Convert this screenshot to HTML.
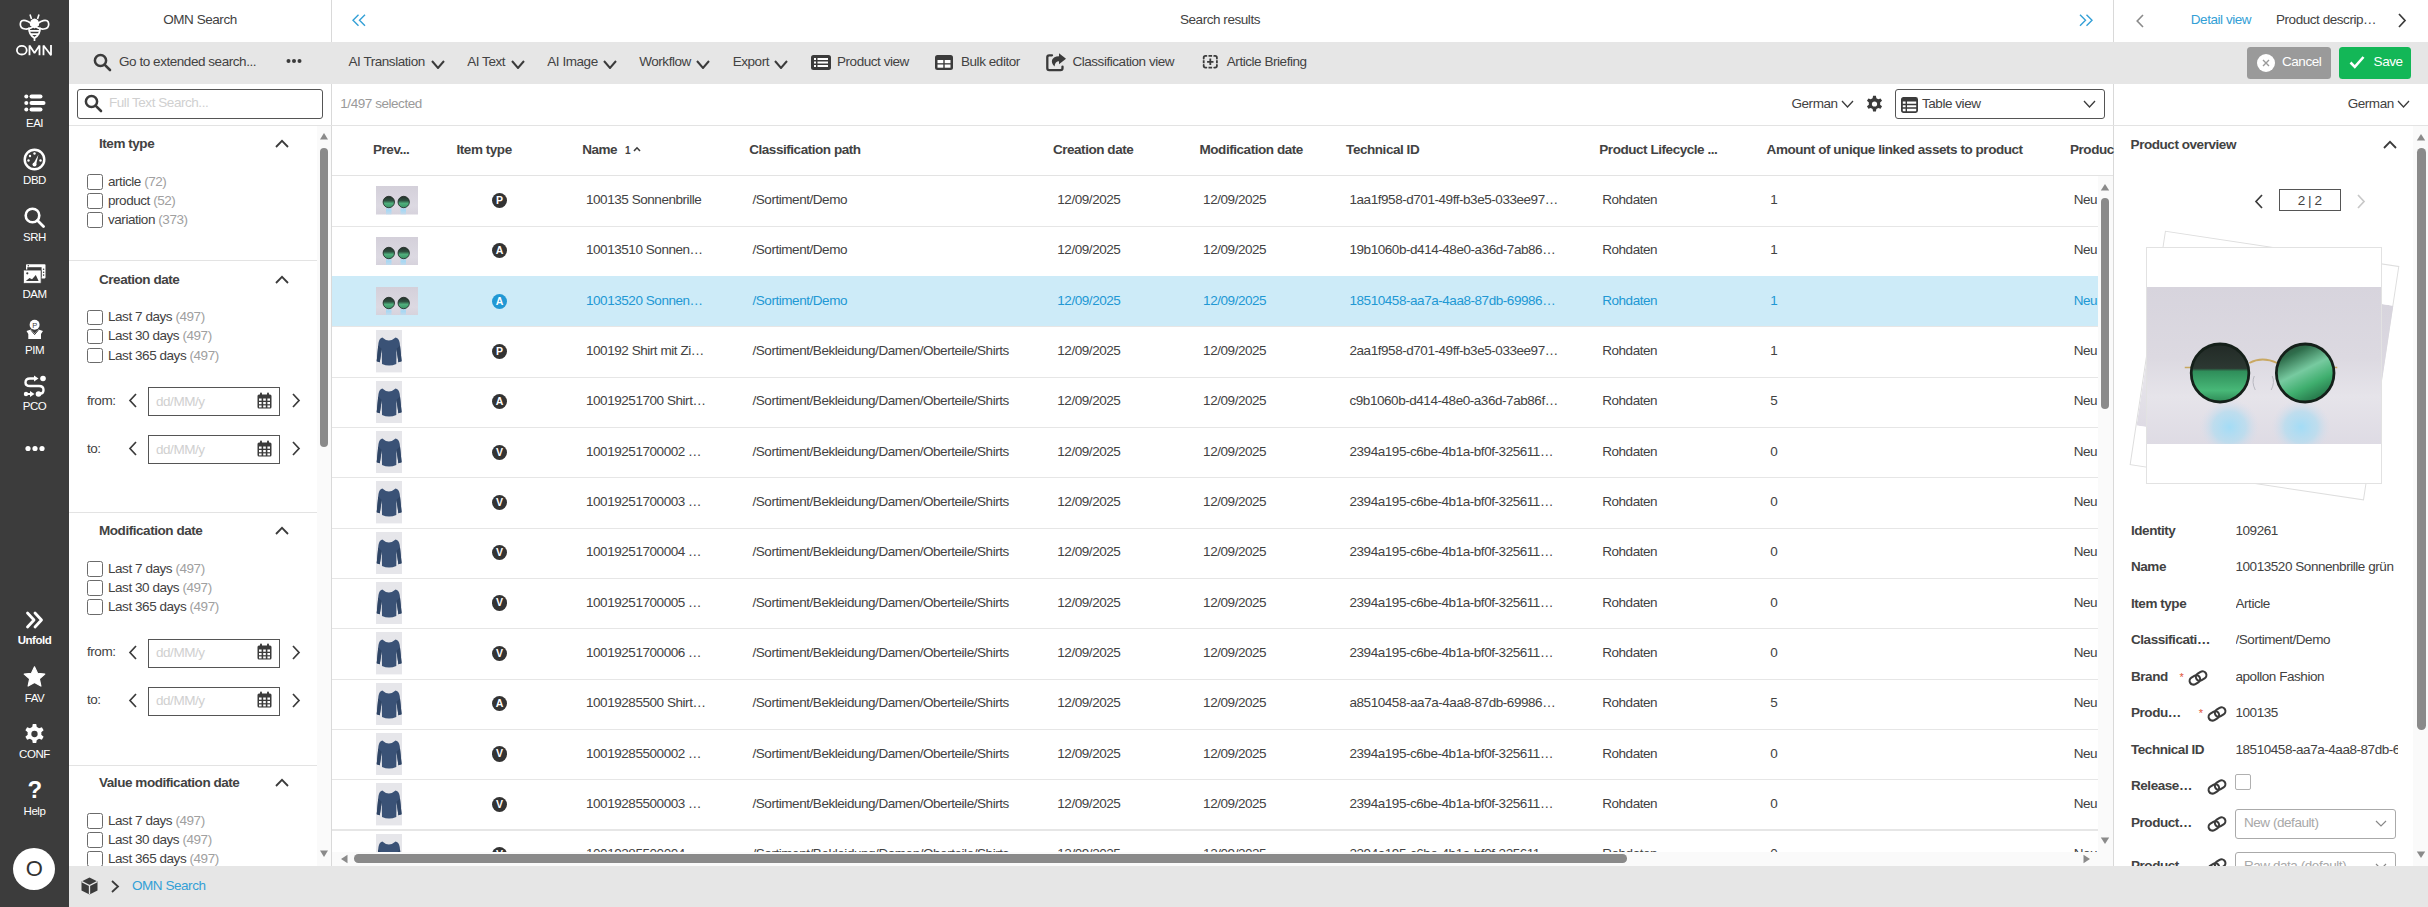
<!DOCTYPE html><html><head><meta charset="utf-8"><style>
*{box-sizing:border-box;margin:0;padding:0}
html,body{width:2428px;height:907px;overflow:hidden;background:#fff;font-family:"Liberation Sans",sans-serif;color:#424242;font-size:13.5px;letter-spacing:-0.45px}
.ab{position:absolute}
.t{position:absolute;white-space:nowrap;line-height:14px}
.b{font-weight:bold}
.side{position:absolute;left:0;top:0;width:69px;height:907px;background:#3c3c3c}
.slab{position:absolute;left:0;width:69px;text-align:center;color:#fff;font-size:11.5px;line-height:12px}
.gray{background:#e6e6e6}
.hl{position:absolute;height:1px;background:#e3e3e3}
.vl{position:absolute;width:1px;background:#d9d9d9}
.cb{position:absolute;width:16px;height:15.5px;border:1.3px solid #6b6b6b;border-radius:2.5px;background:#fff}
.cnt{color:#a0a0a0}
</style></head><body>

<div class="side">
<svg class="ab" style="left:0;top:0" width="69" height="60" viewBox="0 0 69 60">
<g fill="none" stroke="#fff" stroke-width="1.7">
<path d="M33.5 26.5 C30 20.5 20.5 17.5 20.3 24 C20.2 30.5 29 30 33.5 26.5 Z"/>
<path d="M35.5 26.5 C39 20.5 48.5 17.5 48.7 24 C48.8 30.5 40 30 35.5 26.5 Z"/>
<path d="M29 27.5 Q28.5 34.5 34.5 38 Q40.5 34.5 40 27.5"/>
<path d="M29.3 30.8 H39.7 M30.3 34.2 H38.7"/>
<path d="M34.5 37.5 V41"/>
</g>
<path d="M30 25.5 Q29.5 19 34.5 18.5 Q39.5 19 39 25.5 L34.5 28.5 Z" fill="#fff"/>
<path d="M31.5 19 L30 14.5 M37.5 19 L39 14.5" stroke="#fff" stroke-width="1.6"/>
<g fill="none" stroke="#fff" stroke-width="1.8" stroke-linejoin="bevel">
<ellipse cx="21.8" cy="50.2" rx="4.9" ry="4.3"/>
<path d="M29.5 55.3 V45.5 L34.5 53 L39.5 45.5 V55.3"/>
<path d="M43.5 55.3 V45.5 L51 55.3 V45"/>
</g></svg>
<svg class="ab" style="left:24px;top:94px" width="22" height="18" viewBox="0 0 22 18">
<g fill="#fff"><circle cx="2.3" cy="2.5" r="2"/><circle cx="2.3" cy="9" r="2"/><circle cx="2.3" cy="15.5" r="2"/>
<rect x="5.5" y="0.5" width="13" height="4" rx="2"/><rect x="5.5" y="7" width="16" height="4" rx="2"/><rect x="5.5" y="13.5" width="13" height="4" rx="2"/></g></svg>
<div class="slab" style="top:117px">EAI</div>
<svg class="ab" style="left:23px;top:148px" width="23" height="23" viewBox="0 0 23 23">
<circle cx="11.5" cy="11.5" r="9.8" fill="none" stroke="#fff" stroke-width="2.4"/>
<g fill="#fff"><circle cx="7" cy="8" r="1.2"/><circle cx="11.5" cy="5.5" r="1.2"/><circle cx="5.5" cy="12.5" r="1.2"/><circle cx="17.5" cy="12.5" r="1.2"/>
<path d="M10 16.5 L15.5 6.5 L13 17 Z"/><circle cx="11.5" cy="16.5" r="2"/></g></svg>
<div class="slab" style="top:174px">DBD</div>
<svg class="ab" style="left:24px;top:207px" width="21" height="21" viewBox="0 0 21 21">
<circle cx="8.5" cy="8.5" r="6.8" fill="none" stroke="#fff" stroke-width="2.6"/><path d="M13.5 13.5 L19.5 19.5" stroke="#fff" stroke-width="2.8" stroke-linecap="round"/></svg>
<div class="slab" style="top:231px">SRH</div>
<svg class="ab" style="left:23px;top:263px" width="24" height="21" viewBox="0 0 24 21">
<rect x="3" y="1.2" width="19.5" height="14.2" rx="0.8" fill="#fff"/><rect x="4.3" y="4.2" width="14.3" height="9.8" fill="#3c3c3c"/>
<g fill="#3c3c3c"><circle cx="20.6" cy="6.3" r="0.8"/><circle cx="20.6" cy="9.2" r="0.8"/><circle cx="20.6" cy="12.1" r="0.8"/><circle cx="5.3" cy="2.7" r="0.7"/></g>
<rect x="0.4" y="7" width="17.8" height="13.4" rx="0.8" fill="#fff" stroke="#3c3c3c" stroke-width="0.9"/>
<path d="M2.8 18 L6.5 15 L9 16.3 L12.8 12 L15.6 18 Z" fill="#3c3c3c"/><circle cx="4.3" cy="10.3" r="1.1" fill="#3c3c3c"/></svg>
<div class="slab" style="top:288px">DAM</div>
<svg class="ab" style="left:24px;top:319px" width="21" height="21" viewBox="0 0 21 21">
<circle cx="10.6" cy="5.8" r="5" fill="#fff"/><text x="10.6" y="8.7" font-size="7.5" text-anchor="middle" font-family="Liberation Sans" fill="#3c3c3c">P</text>
<path d="M2.5 12 L7 10.5 L10.6 14.5 L14.5 10.5 L19 12 L17 15 L17 20 L4.3 20 L4.3 15 Z" fill="#fff"/>
<path d="M7 11.2 L10.6 15.6 L14.3 11.2" fill="none" stroke="#3c3c3c" stroke-width="1"/></svg>
<div class="slab" style="top:344px">PIM</div>
<svg class="ab" style="left:23px;top:375px" width="24" height="23" viewBox="0 0 24 23">
<g fill="none" stroke="#fff" stroke-width="2.4" stroke-linecap="round">
<path d="M12 3.5 H7 Q2.5 3.5 2.5 7.5 Q2.5 11 7 11 H16 Q20.5 11 20.5 15 Q20.5 19 16 19"/></g>
<g fill="#fff"><circle cx="20" cy="3.5" r="2.8"/><circle cx="3" cy="19" r="2.2"/><circle cx="15.5" cy="19" r="2.8"/>
<path d="M11 0.5 L15.5 3.5 L11 6.5 Z"/><path d="M7 16 L11.5 19 L7 22 Z"/><rect x="4" y="18" width="5" height="2"/></g></svg>
<div class="slab" style="top:400px">PCO</div>
<svg class="ab" style="left:25px;top:445px" width="20" height="7" viewBox="0 0 20 7"><g fill="#fff"><circle cx="3" cy="3.5" r="2.6"/><circle cx="10" cy="3.5" r="2.6"/><circle cx="17" cy="3.5" r="2.6"/></g></svg>
<svg class="ab" style="left:25px;top:611px" width="20" height="18" viewBox="0 0 20 18">
<g fill="none" stroke="#fff" stroke-width="2.8" stroke-linejoin="round" stroke-linecap="round"><path d="M2.5 2 L9 9 L2.5 16"/><path d="M10 2 L16.5 9 L10 16"/></g></svg>
<div class="slab b" style="top:634px;font-size:11.5px">Unfold</div>
<svg class="ab" style="left:23px;top:666px" width="23" height="22" viewBox="0 0 24 23">
<path d="M12 0.8 L15.2 7.6 L22.8 8.4 L17.1 13.5 L18.7 21 L12 17.2 L5.3 21 L6.9 13.5 L1.2 8.4 L8.8 7.6 Z" fill="#fff" stroke="#fff" stroke-width="1.2" stroke-linejoin="round"/></svg>
<div class="slab" style="top:692px">FAV</div>
<svg class="ab" style="left:23px;top:723px" width="23" height="22" viewBox="0 0 24 22">
<path d="M10.2 0.5 h3.6 l0.6 3.1 a8.6 8.6 0 0 1 2.3 1.3 l3-1 1.8 3.1 -2.4 2.1 a8.6 8.6 0 0 1 0 2.7 l2.4 2.1 -1.8 3.1 -3 -1 a8.6 8.6 0 0 1 -2.3 1.3 l-0.6 3.1 h-3.6 l-0.6 -3.1 a8.6 8.6 0 0 1 -2.3 -1.3 l-3 1 -1.8 -3.1 2.4 -2.1 a8.6 8.6 0 0 1 0 -2.7 l-2.4 -2.1 1.8 -3.1 3 1 a8.6 8.6 0 0 1 2.3 -1.3 z" fill="#fff"/><circle cx="12" cy="11" r="3.3" fill="#3c3c3c"/></svg>
<div class="slab" style="top:748px">CONF</div>
<div class="slab b" style="top:777px;font-size:24px;line-height:26px">?</div>
<div class="slab" style="top:805px">Help</div>
<div class="ab" style="left:13px;top:848px;width:42px;height:42px;border-radius:50%;background:#fff;color:#333;font-size:22px;line-height:42px;text-align:center">O</div>
</div>
<div class="ab gray" style="left:69px;top:42px;width:2359px;height:42px"></div>
<div class="vl" style="left:331px;top:0;height:42px"></div>
<div class="vl" style="left:331px;top:84px;height:782px"></div>
<div class="vl" style="left:2113px;top:0;height:42px"></div>
<div class="vl" style="left:2113px;top:84px;height:782px"></div>
<div class="hl" style="left:69px;top:125px;width:2359px"></div>
<div class="t" style="left:69px;width:262px;top:13px;text-align:center">OMN Search</div>
<svg class="ab" style="left:93px;top:53px" width="19" height="19" viewBox="0 0 19 19"><circle cx="7.5" cy="7.5" r="5.6" fill="none" stroke="#3b3b3b" stroke-width="2.5"/><path d="M11.8 11.8 L17 17" stroke="#3b3b3b" stroke-width="2.6" stroke-linecap="round"/></svg>
<div class="t" style="left:119px;top:55px">Go to extended search...</div>
<svg class="ab" style="left:286px;top:58px" width="16" height="6" viewBox="0 0 16 6"><g fill="#3b3b3b"><circle cx="2.5" cy="3" r="2"/><circle cx="8" cy="3" r="2"/><circle cx="13.5" cy="3" r="2"/></g></svg>
<div class="ab" style="left:77px;top:89px;width:246px;height:30px;border:1.3px solid #555;border-radius:3px;background:#fff"></div>
<svg class="ab" style="left:84px;top:94px" width="19" height="19" viewBox="0 0 19 19"><circle cx="7.5" cy="7.5" r="5.6" fill="none" stroke="#3b3b3b" stroke-width="2.5"/><path d="M11.8 11.8 L17 17" stroke="#3b3b3b" stroke-width="2.6" stroke-linecap="round"/></svg>
<div class="t" style="left:109px;top:96px;color:#d0d0d0">Full Text Search...</div>
<div class="ab" style="left:317px;top:126px;width:14px;height:740px;background:#fafafa"></div>
<svg class="ab" style="left:319px;top:132px" width="10" height="8" viewBox="0 0 10 8"><path d="M1 7.5 L5 1 L9 7.5 Z" fill="#8a8a8a"/></svg>
<div class="ab" style="left:320px;top:148px;width:8px;height:299px;border-radius:4px;background:#8a8a8a"></div>
<svg class="ab" style="left:319px;top:850px" width="10" height="8" viewBox="0 0 10 8"><path d="M1 0.5 L5 7 L9 0.5 Z" fill="#8a8a8a"/></svg>
<div class="t b" style="left:99px;top:137px">Item type</div>
<svg class="ab" style="left:275px;top:139px" width="14" height="9" viewBox="0 0 14 9"><path d="M1 8 L7 1.8 L13 8" fill="none" stroke="#3b3b3b" stroke-width="1.8"/></svg>
<div class="cb" style="left:87px;top:174.0px"></div>
<div class="t" style="left:108px;top:174.8px">article <span class="cnt">(72)</span></div>
<div class="cb" style="left:87px;top:193.1px"></div>
<div class="t" style="left:108px;top:193.9px">product <span class="cnt">(52)</span></div>
<div class="cb" style="left:87px;top:212.2px"></div>
<div class="t" style="left:108px;top:213.0px">variation <span class="cnt">(373)</span></div>
<div class="hl" style="left:69px;top:260px;width:248px"></div>
<div class="t b" style="left:99px;top:272.5px">Creation date</div>
<svg class="ab" style="left:275px;top:274.5px" width="14" height="9" viewBox="0 0 14 9"><path d="M1 8 L7 1.8 L13 8" fill="none" stroke="#3b3b3b" stroke-width="1.8"/></svg>
<div class="cb" style="left:87px;top:309.5px"></div>
<div class="t" style="left:108px;top:310.3px">Last 7 days <span class="cnt">(497)</span></div>
<div class="cb" style="left:87px;top:328.6px"></div>
<div class="t" style="left:108px;top:329.4px">Last 30 days <span class="cnt">(497)</span></div>
<div class="cb" style="left:87px;top:347.7px"></div>
<div class="t" style="left:108px;top:348.5px">Last 365 days <span class="cnt">(497)</span></div>
<div class="t" style="left:87px;top:393.5px">from:</div>
<svg class="ab" style="left:128px;top:393.0px" width="10" height="15" viewBox="0 0 10 15"><path d="M8 1 L2 7.5 L8 14" fill="none" stroke="#3b3b3b" stroke-width="1.7"/></svg>
<div class="ab" style="left:148px;top:387.0px;width:132px;height:29px;border:1.3px solid #555;background:#fff"></div>
<div class="t" style="left:156px;top:394.5px;color:#d0d0d0">dd/MM/y</div>
<svg class="ab" style="left:257px;top:391.5px" width="15" height="17" viewBox="0 0 15 17"><rect x="0.5" y="2.5" width="14" height="14" rx="1.5" fill="#3b3b3b"/><rect x="3" y="0.5" width="2" height="4" rx="1" fill="#3b3b3b"/><rect x="10" y="0.5" width="2" height="4" rx="1" fill="#3b3b3b"/>
<g fill="#fff"><rect x="2" y="6.5" width="2.6" height="2.2"/><rect x="6.2" y="6.5" width="2.6" height="2.2"/><rect x="10.4" y="6.5" width="2.6" height="2.2"/><rect x="2" y="10" width="2.6" height="2.2"/><rect x="6.2" y="10" width="2.6" height="2.2"/><rect x="10.4" y="10" width="2.6" height="2.2"/><rect x="2" y="13.4" width="2.6" height="2"/><rect x="6.2" y="13.4" width="2.6" height="2"/><rect x="10.4" y="13.4" width="2.6" height="2"/></g></svg>
<svg class="ab" style="left:291px;top:393.0px" width="10" height="15" viewBox="0 0 10 15"><path d="M2 1 L8 7.5 L2 14" fill="none" stroke="#3b3b3b" stroke-width="1.7"/></svg>
<div class="t" style="left:87px;top:441.5px">to:</div>
<svg class="ab" style="left:128px;top:441.0px" width="10" height="15" viewBox="0 0 10 15"><path d="M8 1 L2 7.5 L8 14" fill="none" stroke="#3b3b3b" stroke-width="1.7"/></svg>
<div class="ab" style="left:148px;top:435.0px;width:132px;height:29px;border:1.3px solid #555;background:#fff"></div>
<div class="t" style="left:156px;top:442.5px;color:#d0d0d0">dd/MM/y</div>
<svg class="ab" style="left:257px;top:439.5px" width="15" height="17" viewBox="0 0 15 17"><rect x="0.5" y="2.5" width="14" height="14" rx="1.5" fill="#3b3b3b"/><rect x="3" y="0.5" width="2" height="4" rx="1" fill="#3b3b3b"/><rect x="10" y="0.5" width="2" height="4" rx="1" fill="#3b3b3b"/>
<g fill="#fff"><rect x="2" y="6.5" width="2.6" height="2.2"/><rect x="6.2" y="6.5" width="2.6" height="2.2"/><rect x="10.4" y="6.5" width="2.6" height="2.2"/><rect x="2" y="10" width="2.6" height="2.2"/><rect x="6.2" y="10" width="2.6" height="2.2"/><rect x="10.4" y="10" width="2.6" height="2.2"/><rect x="2" y="13.4" width="2.6" height="2"/><rect x="6.2" y="13.4" width="2.6" height="2"/><rect x="10.4" y="13.4" width="2.6" height="2"/></g></svg>
<svg class="ab" style="left:291px;top:441.0px" width="10" height="15" viewBox="0 0 10 15"><path d="M2 1 L8 7.5 L2 14" fill="none" stroke="#3b3b3b" stroke-width="1.7"/></svg>
<div class="hl" style="left:69px;top:512px;width:248px"></div>
<div class="t b" style="left:99px;top:524px">Modification date</div>
<svg class="ab" style="left:275px;top:526px" width="14" height="9" viewBox="0 0 14 9"><path d="M1 8 L7 1.8 L13 8" fill="none" stroke="#3b3b3b" stroke-width="1.8"/></svg>
<div class="cb" style="left:87px;top:561.0px"></div>
<div class="t" style="left:108px;top:561.8px">Last 7 days <span class="cnt">(497)</span></div>
<div class="cb" style="left:87px;top:580.1px"></div>
<div class="t" style="left:108px;top:580.9px">Last 30 days <span class="cnt">(497)</span></div>
<div class="cb" style="left:87px;top:599.2px"></div>
<div class="t" style="left:108px;top:600.0px">Last 365 days <span class="cnt">(497)</span></div>
<div class="t" style="left:87px;top:645px">from:</div>
<svg class="ab" style="left:128px;top:644.5px" width="10" height="15" viewBox="0 0 10 15"><path d="M8 1 L2 7.5 L8 14" fill="none" stroke="#3b3b3b" stroke-width="1.7"/></svg>
<div class="ab" style="left:148px;top:638.5px;width:132px;height:29px;border:1.3px solid #555;background:#fff"></div>
<div class="t" style="left:156px;top:646px;color:#d0d0d0">dd/MM/y</div>
<svg class="ab" style="left:257px;top:643px" width="15" height="17" viewBox="0 0 15 17"><rect x="0.5" y="2.5" width="14" height="14" rx="1.5" fill="#3b3b3b"/><rect x="3" y="0.5" width="2" height="4" rx="1" fill="#3b3b3b"/><rect x="10" y="0.5" width="2" height="4" rx="1" fill="#3b3b3b"/>
<g fill="#fff"><rect x="2" y="6.5" width="2.6" height="2.2"/><rect x="6.2" y="6.5" width="2.6" height="2.2"/><rect x="10.4" y="6.5" width="2.6" height="2.2"/><rect x="2" y="10" width="2.6" height="2.2"/><rect x="6.2" y="10" width="2.6" height="2.2"/><rect x="10.4" y="10" width="2.6" height="2.2"/><rect x="2" y="13.4" width="2.6" height="2"/><rect x="6.2" y="13.4" width="2.6" height="2"/><rect x="10.4" y="13.4" width="2.6" height="2"/></g></svg>
<svg class="ab" style="left:291px;top:644.5px" width="10" height="15" viewBox="0 0 10 15"><path d="M2 1 L8 7.5 L2 14" fill="none" stroke="#3b3b3b" stroke-width="1.7"/></svg>
<div class="t" style="left:87px;top:693px">to:</div>
<svg class="ab" style="left:128px;top:692.5px" width="10" height="15" viewBox="0 0 10 15"><path d="M8 1 L2 7.5 L8 14" fill="none" stroke="#3b3b3b" stroke-width="1.7"/></svg>
<div class="ab" style="left:148px;top:686.5px;width:132px;height:29px;border:1.3px solid #555;background:#fff"></div>
<div class="t" style="left:156px;top:694px;color:#d0d0d0">dd/MM/y</div>
<svg class="ab" style="left:257px;top:691px" width="15" height="17" viewBox="0 0 15 17"><rect x="0.5" y="2.5" width="14" height="14" rx="1.5" fill="#3b3b3b"/><rect x="3" y="0.5" width="2" height="4" rx="1" fill="#3b3b3b"/><rect x="10" y="0.5" width="2" height="4" rx="1" fill="#3b3b3b"/>
<g fill="#fff"><rect x="2" y="6.5" width="2.6" height="2.2"/><rect x="6.2" y="6.5" width="2.6" height="2.2"/><rect x="10.4" y="6.5" width="2.6" height="2.2"/><rect x="2" y="10" width="2.6" height="2.2"/><rect x="6.2" y="10" width="2.6" height="2.2"/><rect x="10.4" y="10" width="2.6" height="2.2"/><rect x="2" y="13.4" width="2.6" height="2"/><rect x="6.2" y="13.4" width="2.6" height="2"/><rect x="10.4" y="13.4" width="2.6" height="2"/></g></svg>
<svg class="ab" style="left:291px;top:692.5px" width="10" height="15" viewBox="0 0 10 15"><path d="M2 1 L8 7.5 L2 14" fill="none" stroke="#3b3b3b" stroke-width="1.7"/></svg>
<div class="hl" style="left:69px;top:765px;width:248px"></div>
<div class="t b" style="left:99px;top:776.2px">Value modification date</div>
<svg class="ab" style="left:275px;top:778.2px" width="14" height="9" viewBox="0 0 14 9"><path d="M1 8 L7 1.8 L13 8" fill="none" stroke="#3b3b3b" stroke-width="1.8"/></svg>
<div class="cb" style="left:87px;top:813.2px"></div>
<div class="t" style="left:108px;top:814.0px">Last 7 days <span class="cnt">(497)</span></div>
<div class="cb" style="left:87px;top:832.3px"></div>
<div class="t" style="left:108px;top:833.1px">Last 30 days <span class="cnt">(497)</span></div>
<div class="cb" style="left:87px;top:851.4px"></div>
<div class="t" style="left:108px;top:852.2px">Last 365 days <span class="cnt">(497)</span></div>
<svg class="ab" style="left:352px;top:14px" width="14" height="13" viewBox="0 0 14 13"><path d="M6.5 0.8 L1 6.3 L6.5 11.8 M13 0.8 L7.5 6.3 L13 11.8" fill="none" stroke="#33a0d6" stroke-width="1.4"/></svg>
<div class="t" style="left:1180px;top:13px">Search results</div>
<svg class="ab" style="left:2079px;top:14px" width="14" height="13" viewBox="0 0 14 13"><path d="M1 0.8 L6.5 6.3 L1 11.8 M7.5 0.8 L13 6.3 L7.5 11.8" fill="none" stroke="#33a0d6" stroke-width="1.4"/></svg>
<div class="t" style="left:348.5px;top:55px">AI Translation</div>
<svg class="ab" style="left:430.5px;top:59.5px" width="14" height="9" viewBox="0 0 14 9"><path d="M1 1 L7.0 8 L13 1" fill="none" stroke="#3b3b3b" stroke-width="2"/></svg>
<div class="t" style="left:467.2px;top:55px">AI Text</div>
<svg class="ab" style="left:510.7px;top:59.5px" width="14" height="9" viewBox="0 0 14 9"><path d="M1 1 L7.0 8 L13 1" fill="none" stroke="#3b3b3b" stroke-width="2"/></svg>
<div class="t" style="left:547.3px;top:55px">AI Image</div>
<svg class="ab" style="left:602.5px;top:59.5px" width="14" height="9" viewBox="0 0 14 9"><path d="M1 1 L7.0 8 L13 1" fill="none" stroke="#3b3b3b" stroke-width="2"/></svg>
<div class="t" style="left:639.2px;top:55px">Workflow</div>
<svg class="ab" style="left:696px;top:59.5px" width="14" height="9" viewBox="0 0 14 9"><path d="M1 1 L7.0 8 L13 1" fill="none" stroke="#3b3b3b" stroke-width="2"/></svg>
<div class="t" style="left:732.7px;top:55px">Export</div>
<svg class="ab" style="left:773.9px;top:59.5px" width="14" height="9" viewBox="0 0 14 9"><path d="M1 1 L7.0 8 L13 1" fill="none" stroke="#3b3b3b" stroke-width="2"/></svg>
<svg class="ab" style="left:811px;top:54.5px" width="20" height="15" viewBox="0 0 20 15"><rect x="0" y="0" width="20" height="15" rx="2.5" fill="#3b3b3b"/>
<g fill="#fff"><rect x="3" y="3" width="2" height="2"/><rect x="6.5" y="3" width="10.5" height="2"/><rect x="3" y="6.5" width="2" height="2"/><rect x="6.5" y="6.5" width="10.5" height="2"/><rect x="3" y="10" width="2" height="2"/><rect x="6.5" y="10" width="10.5" height="2"/></g></svg>
<div class="t" style="left:837px;top:55px">Product view</div>
<svg class="ab" style="left:935px;top:54.5px" width="18" height="15" viewBox="0 0 18 15"><rect x="0" y="0" width="18" height="15" rx="2.5" fill="#3b3b3b"/>
<g fill="#fff"><rect x="2.5" y="5" width="5.8" height="3.2"/><rect x="9.7" y="5" width="5.8" height="3.2"/><rect x="2.5" y="9.5" width="5.8" height="3.2"/><rect x="9.7" y="9.5" width="5.8" height="3.2"/></g></svg>
<div class="t" style="left:961px;top:55px">Bulk editor</div>
<svg class="ab" style="left:1046px;top:53px" width="21" height="19" viewBox="0 0 21 19"><path d="M6 2.3 H3.2 Q1.3 2.3 1.3 4.2 V15.3 Q1.3 17.2 3.2 17.2 H14.6 Q16.5 17.2 16.5 15.3 V13.6" fill="none" stroke="#3b3b3b" stroke-width="2.3" stroke-linecap="round"/>
<path d="M8.5 13.4 C3.8 9 5.5 3.6 13 3.3 L13 0.2 L20 5.7 L13 11.2 L13 8.3 C10.4 8.3 9 10 8.5 13.4 Z" fill="#3b3b3b"/></svg>
<div class="t" style="left:1072.4px;top:55px">Classification view</div>
<svg class="ab" style="left:1202px;top:54px" width="17" height="16" viewBox="0 0 17 16"><g fill="none" stroke="#3b3b3b" stroke-width="1.8" stroke-linecap="round">
<path d="M1.7 4.6 V3.7 Q1.7 1.9 3.5 1.9 H4.4 M12.2 1.9 H13.1 Q14.9 1.9 14.9 3.7 V4.6 M1.7 10.9 V11.8 Q1.7 13.6 3.5 13.6 H4.4 M12.2 13.6 H13.1 Q14.9 13.6 14.9 11.8 V10.9"/>
<path d="M6.5 1.9 H10.1 M6.5 13.6 H10.1 M1.7 6.3 V9.2 M14.9 6.3 V9.2" stroke-linecap="butt"/>
<path d="M8.3 4.6 V11 M5.1 7.8 H11.5" stroke-linecap="butt"/></g></svg>
<div class="t" style="left:1226.8px;top:55px">Article Briefing</div>
<div class="t" style="left:340.3px;top:97px;color:#9a9a9a">1/497 selected</div>
<div class="t" style="left:1791.5px;top:97px">German</div>
<svg class="ab" style="left:1841px;top:100px" width="13" height="8" viewBox="0 0 13 8"><path d="M1 1 L6.5 7 L12 1" fill="none" stroke="#3b3b3b" stroke-width="1.3"/></svg>
<svg class="ab" style="left:1865px;top:95px" width="19" height="18" viewBox="0 0 24 22"><path d="M10.2 0.5 h3.6 l0.6 3.1 a8.6 8.6 0 0 1 2.3 1.3 l3-1 1.8 3.1 -2.4 2.1 a8.6 8.6 0 0 1 0 2.7 l2.4 2.1 -1.8 3.1 -3 -1 a8.6 8.6 0 0 1 -2.3 1.3 l-0.6 3.1 h-3.6 l-0.6 -3.1 a8.6 8.6 0 0 1 -2.3 -1.3 l-3 1 -1.8 -3.1 2.4 -2.1 a8.6 8.6 0 0 1 0 -2.7 l-2.4 -2.1 1.8 -3.1 3 1 a8.6 8.6 0 0 1 2.3 -1.3 z" fill="#3b3b3b"/><circle cx="12" cy="11" r="3.3" fill="#fff"/></svg>
<div class="ab" style="left:1895px;top:89px;width:209.5px;height:30px;border:1.3px solid #555;border-radius:3px"></div>
<svg class="ab" style="left:1901px;top:96.5px" width="17" height="16" viewBox="0 0 17 16"><rect x="0.9" y="0.9" width="15.2" height="14.2" rx="1.5" fill="none" stroke="#3b3b3b" stroke-width="1.8"/>
<rect x="1" y="1" width="15" height="3.5" fill="#3b3b3b"/><path d="M5.3 4 V15 M1 7.5 H16 M1 11 H16" stroke="#3b3b3b" stroke-width="1.4"/></svg>
<div class="t" style="left:1922px;top:97px">Table view</div>
<svg class="ab" style="left:2083px;top:100px" width="13" height="8" viewBox="0 0 13 8"><path d="M1 1 L6.5 7 L12 1" fill="none" stroke="#3b3b3b" stroke-width="1.3"/></svg>
<div class="hl" style="left:332px;top:175px;width:1781px"></div>
<div class="t b" style="left:373px;top:143px">Prev...</div>
<div class="t b" style="left:456.5px;top:143px">Item type</div>
<div class="t b" style="left:582.2px;top:143px">Name</div>
<div class="t b" style="left:749.2px;top:143px">Classification path</div>
<div class="t b" style="left:1052.9px;top:143px">Creation date</div>
<div class="t b" style="left:1199.5px;top:143px">Modification date</div>
<div class="t b" style="left:1346.1px;top:143px">Technical ID</div>
<div class="t b" style="left:1599.3px;top:143px">Product Lifecycle ...</div>
<div class="t b" style="left:1766.6px;top:143px">Amount of unique linked assets to product</div>
<div class="t b" style="left:2070px;top:143px">Produc</div>
<div class="t b" style="left:625px;top:144px;font-size:10px">1</div>
<svg class="ab" style="left:633px;top:146px" width="8" height="6" viewBox="0 0 8 6"><path d="M1 5 L4 1.8 L7 5" fill="none" stroke="#3b3b3b" stroke-width="1.6"/></svg>
<div class="ab" style="left:332px;top:176px;width:1766px;height:675.5px;overflow:hidden">
<svg class="ab" style="left:44px;top:10.3px" width="42" height="28.5" viewBox="0 0 42 28.5"><defs><linearGradient id="gb0" x1="0" y1="0" x2="0" y2="1"><stop offset="0" stop-color="#d4d0da"/><stop offset="0.7" stop-color="#dcd9e2"/><stop offset="1" stop-color="#d6d2dc"/></linearGradient>
<linearGradient id="gl0" x1="0" y1="0" x2="0" y2="1"><stop offset="0" stop-color="#25302a"/><stop offset="0.38" stop-color="#2e5040"/><stop offset="0.62" stop-color="#4fae7c"/><stop offset="1" stop-color="#3b9466"/></linearGradient>
<linearGradient id="gr0" x1="0" y1="0" x2="0" y2="1"><stop offset="0" stop-color="#a6d6f2" stop-opacity="0.2"/><stop offset="0.5" stop-color="#a6d8f4"/><stop offset="1" stop-color="#b8dcf2" stop-opacity="0.6"/></linearGradient></defs>
<rect width="42" height="28.5" fill="url(#gb0)"/><rect x="10" y="20" width="5.5" height="8.5" fill="url(#gr0)"/><rect x="24.5" y="20" width="5.5" height="8.5" fill="url(#gr0)"/>
<circle cx="12.8" cy="16" r="5.7" fill="url(#gl0)" stroke="#1b2520" stroke-width="0.8"/><circle cx="27.7" cy="16" r="5.7" fill="url(#gl0)" stroke="#1b2520" stroke-width="0.8"/>
</svg>
<div class="ab" style="left:159.8px;top:16.9px;width:15.2px;height:15.2px;border-radius:50%;background:#333;color:#fff;font-weight:bold;font-size:10.5px;line-height:15.4px;text-align:center">P</div>
<div class="t" style="left:254.0px;top:17.0px;color:#424242">100135 Sonnenbrille</div>
<div class="t" style="left:420.5px;top:17.0px;color:#424242">/Sortiment/Demo</div>
<div class="t" style="left:725.3px;top:17.0px;color:#424242">12/09/2025</div>
<div class="t" style="left:871.1px;top:17.0px;color:#424242">12/09/2025</div>
<div class="t" style="left:1017.5px;top:17.0px;color:#424242">1aa1f958-d701-49ff-b3e5-033ee97…</div>
<div class="t" style="left:1270.2px;top:17.0px;color:#424242">Rohdaten</div>
<div class="t" style="left:1438.3px;top:17.0px;color:#424242">1</div>
<div class="t" style="left:1741.7px;top:17.0px;color:#424242">Neu</div>
<div class="ab" style="left:0;top:49.62px;width:1766px;height:1.2px;background:#e6e6e6"></div>
<svg class="ab" style="left:44px;top:60.6px" width="42" height="28.5" viewBox="0 0 42 28.5"><defs><linearGradient id="gb1" x1="0" y1="0" x2="0" y2="1"><stop offset="0" stop-color="#d4d0da"/><stop offset="0.7" stop-color="#dcd9e2"/><stop offset="1" stop-color="#d6d2dc"/></linearGradient>
<linearGradient id="gl1" x1="0" y1="0" x2="0" y2="1"><stop offset="0" stop-color="#25302a"/><stop offset="0.38" stop-color="#2e5040"/><stop offset="0.62" stop-color="#4fae7c"/><stop offset="1" stop-color="#3b9466"/></linearGradient>
<linearGradient id="gr1" x1="0" y1="0" x2="0" y2="1"><stop offset="0" stop-color="#a6d6f2" stop-opacity="0.2"/><stop offset="0.5" stop-color="#a6d8f4"/><stop offset="1" stop-color="#b8dcf2" stop-opacity="0.6"/></linearGradient></defs>
<rect width="42" height="28.5" fill="url(#gb1)"/><rect x="10" y="20" width="5.5" height="8.5" fill="url(#gr1)"/><rect x="24.5" y="20" width="5.5" height="8.5" fill="url(#gr1)"/>
<circle cx="12.8" cy="16" r="5.7" fill="url(#gl1)" stroke="#1b2520" stroke-width="0.8"/><circle cx="27.7" cy="16" r="5.7" fill="url(#gl1)" stroke="#1b2520" stroke-width="0.8"/>
</svg>
<div class="ab" style="left:159.8px;top:67.2px;width:15.2px;height:15.2px;border-radius:50%;background:#333;color:#fff;font-weight:bold;font-size:10.5px;line-height:15.4px;text-align:center">A</div>
<div class="t" style="left:254.0px;top:67.3px;color:#424242">10013510 Sonnen…</div>
<div class="t" style="left:420.5px;top:67.3px;color:#424242">/Sortiment/Demo</div>
<div class="t" style="left:725.3px;top:67.3px;color:#424242">12/09/2025</div>
<div class="t" style="left:871.1px;top:67.3px;color:#424242">12/09/2025</div>
<div class="t" style="left:1017.5px;top:67.3px;color:#424242">19b1060b-d414-48e0-a36d-7ab86…</div>
<div class="t" style="left:1270.2px;top:67.3px;color:#424242">Rohdaten</div>
<div class="t" style="left:1438.3px;top:67.3px;color:#424242">1</div>
<div class="t" style="left:1741.7px;top:67.3px;color:#424242">Neu</div>
<div class="ab" style="left:0;top:99.94px;width:1766px;height:50.32px;background:#cdebf8"></div>
<svg class="ab" style="left:44px;top:110.9px" width="42" height="28.5" viewBox="0 0 42 28.5"><defs><linearGradient id="gb2" x1="0" y1="0" x2="0" y2="1"><stop offset="0" stop-color="#d4d0da"/><stop offset="0.7" stop-color="#dcd9e2"/><stop offset="1" stop-color="#d6d2dc"/></linearGradient>
<linearGradient id="gl2" x1="0" y1="0" x2="0" y2="1"><stop offset="0" stop-color="#25302a"/><stop offset="0.38" stop-color="#2e5040"/><stop offset="0.62" stop-color="#4fae7c"/><stop offset="1" stop-color="#3b9466"/></linearGradient>
<linearGradient id="gr2" x1="0" y1="0" x2="0" y2="1"><stop offset="0" stop-color="#a6d6f2" stop-opacity="0.2"/><stop offset="0.5" stop-color="#a6d8f4"/><stop offset="1" stop-color="#b8dcf2" stop-opacity="0.6"/></linearGradient></defs>
<rect width="42" height="28.5" fill="url(#gb2)"/><rect x="10" y="20" width="5.5" height="8.5" fill="url(#gr2)"/><rect x="24.5" y="20" width="5.5" height="8.5" fill="url(#gr2)"/>
<circle cx="12.8" cy="16" r="5.7" fill="url(#gl2)" stroke="#1b2520" stroke-width="0.8"/><circle cx="27.7" cy="16" r="5.7" fill="url(#gl2)" stroke="#1b2520" stroke-width="0.8"/>
</svg>
<div class="ab" style="left:159.8px;top:117.5px;width:15.2px;height:15.2px;border-radius:50%;background:#2198d4;color:#fff;font-weight:bold;font-size:10.5px;line-height:15.4px;text-align:center">A</div>
<div class="t" style="left:254.0px;top:117.6px;color:#2198d4">10013520 Sonnen…</div>
<div class="t" style="left:420.5px;top:117.6px;color:#2198d4">/Sortiment/Demo</div>
<div class="t" style="left:725.3px;top:117.6px;color:#2198d4">12/09/2025</div>
<div class="t" style="left:871.1px;top:117.6px;color:#2198d4">12/09/2025</div>
<div class="t" style="left:1017.5px;top:117.6px;color:#2198d4">18510458-aa7a-4aa8-87db-69986…</div>
<div class="t" style="left:1270.2px;top:117.6px;color:#2198d4">Rohdaten</div>
<div class="t" style="left:1438.3px;top:117.6px;color:#2198d4">1</div>
<div class="t" style="left:1741.7px;top:117.6px;color:#2198d4">Neu</div>
<svg class="ab" style="left:44px;top:154.4px" width="26" height="42.4" viewBox="0 0 26 42.4"><rect width="26" height="42.4" fill="#e6e6ea"/>
<path d="M6.3 7.4 Q12.8 13.5 19.6 7.4 L21.3 8.3 Q23.6 9.8 24 15.5 L25.6 31.2 L22.4 32.2 L20.5 19 L20.3 34 Q13 37.2 6 34 L5.7 19 L3.8 32.2 L0.7 31.2 L2.2 15.5 Q2.6 9.8 4.8 8.3 Z" fill="#3a5276"/>
<path d="M20.5 19 L22.4 32.2 L25.6 31.2 L24 15.5 Z M5.7 19 L3.8 32.2 L0.7 31.2 L2.2 15.5 Z" fill="#2f4565"/></svg>
<div class="ab" style="left:159.8px;top:167.8px;width:15.2px;height:15.2px;border-radius:50%;background:#333;color:#fff;font-weight:bold;font-size:10.5px;line-height:15.4px;text-align:center">P</div>
<div class="t" style="left:254.0px;top:167.9px;color:#424242">100192 Shirt mit Zi…</div>
<div class="t" style="left:420.5px;top:167.9px;color:#424242">/Sortiment/Bekleidung/Damen/Oberteile/Shirts</div>
<div class="t" style="left:725.3px;top:167.9px;color:#424242">12/09/2025</div>
<div class="t" style="left:871.1px;top:167.9px;color:#424242">12/09/2025</div>
<div class="t" style="left:1017.5px;top:167.9px;color:#424242">2aa1f958-d701-49ff-b3e5-033ee97…</div>
<div class="t" style="left:1270.2px;top:167.9px;color:#424242">Rohdaten</div>
<div class="t" style="left:1438.3px;top:167.9px;color:#424242">1</div>
<div class="t" style="left:1741.7px;top:167.9px;color:#424242">Neu</div>
<div class="ab" style="left:0;top:200.58px;width:1766px;height:1.2px;background:#e6e6e6"></div>
<svg class="ab" style="left:44px;top:204.7px" width="26" height="42.4" viewBox="0 0 26 42.4"><rect width="26" height="42.4" fill="#e6e6ea"/>
<path d="M6.3 7.4 Q12.8 13.5 19.6 7.4 L21.3 8.3 Q23.6 9.8 24 15.5 L25.6 31.2 L22.4 32.2 L20.5 19 L20.3 34 Q13 37.2 6 34 L5.7 19 L3.8 32.2 L0.7 31.2 L2.2 15.5 Q2.6 9.8 4.8 8.3 Z" fill="#3a5276"/>
<path d="M20.5 19 L22.4 32.2 L25.6 31.2 L24 15.5 Z M5.7 19 L3.8 32.2 L0.7 31.2 L2.2 15.5 Z" fill="#2f4565"/></svg>
<div class="ab" style="left:159.8px;top:218.1px;width:15.2px;height:15.2px;border-radius:50%;background:#333;color:#fff;font-weight:bold;font-size:10.5px;line-height:15.4px;text-align:center">A</div>
<div class="t" style="left:254.0px;top:218.2px;color:#424242">10019251700 Shirt…</div>
<div class="t" style="left:420.5px;top:218.2px;color:#424242">/Sortiment/Bekleidung/Damen/Oberteile/Shirts</div>
<div class="t" style="left:725.3px;top:218.2px;color:#424242">12/09/2025</div>
<div class="t" style="left:871.1px;top:218.2px;color:#424242">12/09/2025</div>
<div class="t" style="left:1017.5px;top:218.2px;color:#424242">c9b1060b-d414-48e0-a36d-7ab86f…</div>
<div class="t" style="left:1270.2px;top:218.2px;color:#424242">Rohdaten</div>
<div class="t" style="left:1438.3px;top:218.2px;color:#424242">5</div>
<div class="t" style="left:1741.7px;top:218.2px;color:#424242">Neu</div>
<div class="ab" style="left:0;top:250.90px;width:1766px;height:1.2px;background:#e6e6e6"></div>
<svg class="ab" style="left:44px;top:255.1px" width="26" height="42.4" viewBox="0 0 26 42.4"><rect width="26" height="42.4" fill="#e6e6ea"/>
<path d="M6.3 7.4 Q12.8 13.5 19.6 7.4 L21.3 8.3 Q23.6 9.8 24 15.5 L25.6 31.2 L22.4 32.2 L20.5 19 L20.3 34 Q13 37.2 6 34 L5.7 19 L3.8 32.2 L0.7 31.2 L2.2 15.5 Q2.6 9.8 4.8 8.3 Z" fill="#3a5276"/>
<path d="M20.5 19 L22.4 32.2 L25.6 31.2 L24 15.5 Z M5.7 19 L3.8 32.2 L0.7 31.2 L2.2 15.5 Z" fill="#2f4565"/></svg>
<div class="ab" style="left:159.8px;top:268.5px;width:15.2px;height:15.2px;border-radius:50%;background:#333;color:#fff;font-weight:bold;font-size:10.5px;line-height:15.4px;text-align:center">V</div>
<div class="t" style="left:254.0px;top:268.6px;color:#424242">10019251700002 …</div>
<div class="t" style="left:420.5px;top:268.6px;color:#424242">/Sortiment/Bekleidung/Damen/Oberteile/Shirts</div>
<div class="t" style="left:725.3px;top:268.6px;color:#424242">12/09/2025</div>
<div class="t" style="left:871.1px;top:268.6px;color:#424242">12/09/2025</div>
<div class="t" style="left:1017.5px;top:268.6px;color:#424242">2394a195-c6be-4b1a-bf0f-325611…</div>
<div class="t" style="left:1270.2px;top:268.6px;color:#424242">Rohdaten</div>
<div class="t" style="left:1438.3px;top:268.6px;color:#424242">0</div>
<div class="t" style="left:1741.7px;top:268.6px;color:#424242">Neu</div>
<div class="ab" style="left:0;top:301.22px;width:1766px;height:1.2px;background:#e6e6e6"></div>
<svg class="ab" style="left:44px;top:305.4px" width="26" height="42.4" viewBox="0 0 26 42.4"><rect width="26" height="42.4" fill="#e6e6ea"/>
<path d="M6.3 7.4 Q12.8 13.5 19.6 7.4 L21.3 8.3 Q23.6 9.8 24 15.5 L25.6 31.2 L22.4 32.2 L20.5 19 L20.3 34 Q13 37.2 6 34 L5.7 19 L3.8 32.2 L0.7 31.2 L2.2 15.5 Q2.6 9.8 4.8 8.3 Z" fill="#3a5276"/>
<path d="M20.5 19 L22.4 32.2 L25.6 31.2 L24 15.5 Z M5.7 19 L3.8 32.2 L0.7 31.2 L2.2 15.5 Z" fill="#2f4565"/></svg>
<div class="ab" style="left:159.8px;top:318.8px;width:15.2px;height:15.2px;border-radius:50%;background:#333;color:#fff;font-weight:bold;font-size:10.5px;line-height:15.4px;text-align:center">V</div>
<div class="t" style="left:254.0px;top:318.9px;color:#424242">10019251700003 …</div>
<div class="t" style="left:420.5px;top:318.9px;color:#424242">/Sortiment/Bekleidung/Damen/Oberteile/Shirts</div>
<div class="t" style="left:725.3px;top:318.9px;color:#424242">12/09/2025</div>
<div class="t" style="left:871.1px;top:318.9px;color:#424242">12/09/2025</div>
<div class="t" style="left:1017.5px;top:318.9px;color:#424242">2394a195-c6be-4b1a-bf0f-325611…</div>
<div class="t" style="left:1270.2px;top:318.9px;color:#424242">Rohdaten</div>
<div class="t" style="left:1438.3px;top:318.9px;color:#424242">0</div>
<div class="t" style="left:1741.7px;top:318.9px;color:#424242">Neu</div>
<div class="ab" style="left:0;top:351.54px;width:1766px;height:1.2px;background:#e6e6e6"></div>
<svg class="ab" style="left:44px;top:355.7px" width="26" height="42.4" viewBox="0 0 26 42.4"><rect width="26" height="42.4" fill="#e6e6ea"/>
<path d="M6.3 7.4 Q12.8 13.5 19.6 7.4 L21.3 8.3 Q23.6 9.8 24 15.5 L25.6 31.2 L22.4 32.2 L20.5 19 L20.3 34 Q13 37.2 6 34 L5.7 19 L3.8 32.2 L0.7 31.2 L2.2 15.5 Q2.6 9.8 4.8 8.3 Z" fill="#3a5276"/>
<path d="M20.5 19 L22.4 32.2 L25.6 31.2 L24 15.5 Z M5.7 19 L3.8 32.2 L0.7 31.2 L2.2 15.5 Z" fill="#2f4565"/></svg>
<div class="ab" style="left:159.8px;top:369.1px;width:15.2px;height:15.2px;border-radius:50%;background:#333;color:#fff;font-weight:bold;font-size:10.5px;line-height:15.4px;text-align:center">V</div>
<div class="t" style="left:254.0px;top:369.2px;color:#424242">10019251700004 …</div>
<div class="t" style="left:420.5px;top:369.2px;color:#424242">/Sortiment/Bekleidung/Damen/Oberteile/Shirts</div>
<div class="t" style="left:725.3px;top:369.2px;color:#424242">12/09/2025</div>
<div class="t" style="left:871.1px;top:369.2px;color:#424242">12/09/2025</div>
<div class="t" style="left:1017.5px;top:369.2px;color:#424242">2394a195-c6be-4b1a-bf0f-325611…</div>
<div class="t" style="left:1270.2px;top:369.2px;color:#424242">Rohdaten</div>
<div class="t" style="left:1438.3px;top:369.2px;color:#424242">0</div>
<div class="t" style="left:1741.7px;top:369.2px;color:#424242">Neu</div>
<div class="ab" style="left:0;top:401.86px;width:1766px;height:1.2px;background:#e6e6e6"></div>
<svg class="ab" style="left:44px;top:406.0px" width="26" height="42.4" viewBox="0 0 26 42.4"><rect width="26" height="42.4" fill="#e6e6ea"/>
<path d="M6.3 7.4 Q12.8 13.5 19.6 7.4 L21.3 8.3 Q23.6 9.8 24 15.5 L25.6 31.2 L22.4 32.2 L20.5 19 L20.3 34 Q13 37.2 6 34 L5.7 19 L3.8 32.2 L0.7 31.2 L2.2 15.5 Q2.6 9.8 4.8 8.3 Z" fill="#3a5276"/>
<path d="M20.5 19 L22.4 32.2 L25.6 31.2 L24 15.5 Z M5.7 19 L3.8 32.2 L0.7 31.2 L2.2 15.5 Z" fill="#2f4565"/></svg>
<div class="ab" style="left:159.8px;top:419.4px;width:15.2px;height:15.2px;border-radius:50%;background:#333;color:#fff;font-weight:bold;font-size:10.5px;line-height:15.4px;text-align:center">V</div>
<div class="t" style="left:254.0px;top:419.5px;color:#424242">10019251700005 …</div>
<div class="t" style="left:420.5px;top:419.5px;color:#424242">/Sortiment/Bekleidung/Damen/Oberteile/Shirts</div>
<div class="t" style="left:725.3px;top:419.5px;color:#424242">12/09/2025</div>
<div class="t" style="left:871.1px;top:419.5px;color:#424242">12/09/2025</div>
<div class="t" style="left:1017.5px;top:419.5px;color:#424242">2394a195-c6be-4b1a-bf0f-325611…</div>
<div class="t" style="left:1270.2px;top:419.5px;color:#424242">Rohdaten</div>
<div class="t" style="left:1438.3px;top:419.5px;color:#424242">0</div>
<div class="t" style="left:1741.7px;top:419.5px;color:#424242">Neu</div>
<div class="ab" style="left:0;top:452.18px;width:1766px;height:1.2px;background:#e6e6e6"></div>
<svg class="ab" style="left:44px;top:456.3px" width="26" height="42.4" viewBox="0 0 26 42.4"><rect width="26" height="42.4" fill="#e6e6ea"/>
<path d="M6.3 7.4 Q12.8 13.5 19.6 7.4 L21.3 8.3 Q23.6 9.8 24 15.5 L25.6 31.2 L22.4 32.2 L20.5 19 L20.3 34 Q13 37.2 6 34 L5.7 19 L3.8 32.2 L0.7 31.2 L2.2 15.5 Q2.6 9.8 4.8 8.3 Z" fill="#3a5276"/>
<path d="M20.5 19 L22.4 32.2 L25.6 31.2 L24 15.5 Z M5.7 19 L3.8 32.2 L0.7 31.2 L2.2 15.5 Z" fill="#2f4565"/></svg>
<div class="ab" style="left:159.8px;top:469.7px;width:15.2px;height:15.2px;border-radius:50%;background:#333;color:#fff;font-weight:bold;font-size:10.5px;line-height:15.4px;text-align:center">V</div>
<div class="t" style="left:254.0px;top:469.8px;color:#424242">10019251700006 …</div>
<div class="t" style="left:420.5px;top:469.8px;color:#424242">/Sortiment/Bekleidung/Damen/Oberteile/Shirts</div>
<div class="t" style="left:725.3px;top:469.8px;color:#424242">12/09/2025</div>
<div class="t" style="left:871.1px;top:469.8px;color:#424242">12/09/2025</div>
<div class="t" style="left:1017.5px;top:469.8px;color:#424242">2394a195-c6be-4b1a-bf0f-325611…</div>
<div class="t" style="left:1270.2px;top:469.8px;color:#424242">Rohdaten</div>
<div class="t" style="left:1438.3px;top:469.8px;color:#424242">0</div>
<div class="t" style="left:1741.7px;top:469.8px;color:#424242">Neu</div>
<div class="ab" style="left:0;top:502.50px;width:1766px;height:1.2px;background:#e6e6e6"></div>
<svg class="ab" style="left:44px;top:506.7px" width="26" height="42.4" viewBox="0 0 26 42.4"><rect width="26" height="42.4" fill="#e6e6ea"/>
<path d="M6.3 7.4 Q12.8 13.5 19.6 7.4 L21.3 8.3 Q23.6 9.8 24 15.5 L25.6 31.2 L22.4 32.2 L20.5 19 L20.3 34 Q13 37.2 6 34 L5.7 19 L3.8 32.2 L0.7 31.2 L2.2 15.5 Q2.6 9.8 4.8 8.3 Z" fill="#3a5276"/>
<path d="M20.5 19 L22.4 32.2 L25.6 31.2 L24 15.5 Z M5.7 19 L3.8 32.2 L0.7 31.2 L2.2 15.5 Z" fill="#2f4565"/></svg>
<div class="ab" style="left:159.8px;top:520.1px;width:15.2px;height:15.2px;border-radius:50%;background:#333;color:#fff;font-weight:bold;font-size:10.5px;line-height:15.4px;text-align:center">A</div>
<div class="t" style="left:254.0px;top:520.2px;color:#424242">10019285500 Shirt…</div>
<div class="t" style="left:420.5px;top:520.2px;color:#424242">/Sortiment/Bekleidung/Damen/Oberteile/Shirts</div>
<div class="t" style="left:725.3px;top:520.2px;color:#424242">12/09/2025</div>
<div class="t" style="left:871.1px;top:520.2px;color:#424242">12/09/2025</div>
<div class="t" style="left:1017.5px;top:520.2px;color:#424242">a8510458-aa7a-4aa8-87db-69986…</div>
<div class="t" style="left:1270.2px;top:520.2px;color:#424242">Rohdaten</div>
<div class="t" style="left:1438.3px;top:520.2px;color:#424242">5</div>
<div class="t" style="left:1741.7px;top:520.2px;color:#424242">Neu</div>
<div class="ab" style="left:0;top:552.82px;width:1766px;height:1.2px;background:#e6e6e6"></div>
<svg class="ab" style="left:44px;top:557.0px" width="26" height="42.4" viewBox="0 0 26 42.4"><rect width="26" height="42.4" fill="#e6e6ea"/>
<path d="M6.3 7.4 Q12.8 13.5 19.6 7.4 L21.3 8.3 Q23.6 9.8 24 15.5 L25.6 31.2 L22.4 32.2 L20.5 19 L20.3 34 Q13 37.2 6 34 L5.7 19 L3.8 32.2 L0.7 31.2 L2.2 15.5 Q2.6 9.8 4.8 8.3 Z" fill="#3a5276"/>
<path d="M20.5 19 L22.4 32.2 L25.6 31.2 L24 15.5 Z M5.7 19 L3.8 32.2 L0.7 31.2 L2.2 15.5 Z" fill="#2f4565"/></svg>
<div class="ab" style="left:159.8px;top:570.4px;width:15.2px;height:15.2px;border-radius:50%;background:#333;color:#fff;font-weight:bold;font-size:10.5px;line-height:15.4px;text-align:center">V</div>
<div class="t" style="left:254.0px;top:570.5px;color:#424242">10019285500002 …</div>
<div class="t" style="left:420.5px;top:570.5px;color:#424242">/Sortiment/Bekleidung/Damen/Oberteile/Shirts</div>
<div class="t" style="left:725.3px;top:570.5px;color:#424242">12/09/2025</div>
<div class="t" style="left:871.1px;top:570.5px;color:#424242">12/09/2025</div>
<div class="t" style="left:1017.5px;top:570.5px;color:#424242">2394a195-c6be-4b1a-bf0f-325611…</div>
<div class="t" style="left:1270.2px;top:570.5px;color:#424242">Rohdaten</div>
<div class="t" style="left:1438.3px;top:570.5px;color:#424242">0</div>
<div class="t" style="left:1741.7px;top:570.5px;color:#424242">Neu</div>
<div class="ab" style="left:0;top:603.14px;width:1766px;height:1.2px;background:#e6e6e6"></div>
<svg class="ab" style="left:44px;top:607.3px" width="26" height="42.4" viewBox="0 0 26 42.4"><rect width="26" height="42.4" fill="#e6e6ea"/>
<path d="M6.3 7.4 Q12.8 13.5 19.6 7.4 L21.3 8.3 Q23.6 9.8 24 15.5 L25.6 31.2 L22.4 32.2 L20.5 19 L20.3 34 Q13 37.2 6 34 L5.7 19 L3.8 32.2 L0.7 31.2 L2.2 15.5 Q2.6 9.8 4.8 8.3 Z" fill="#3a5276"/>
<path d="M20.5 19 L22.4 32.2 L25.6 31.2 L24 15.5 Z M5.7 19 L3.8 32.2 L0.7 31.2 L2.2 15.5 Z" fill="#2f4565"/></svg>
<div class="ab" style="left:159.8px;top:620.7px;width:15.2px;height:15.2px;border-radius:50%;background:#333;color:#fff;font-weight:bold;font-size:10.5px;line-height:15.4px;text-align:center">V</div>
<div class="t" style="left:254.0px;top:620.8px;color:#424242">10019285500003 …</div>
<div class="t" style="left:420.5px;top:620.8px;color:#424242">/Sortiment/Bekleidung/Damen/Oberteile/Shirts</div>
<div class="t" style="left:725.3px;top:620.8px;color:#424242">12/09/2025</div>
<div class="t" style="left:871.1px;top:620.8px;color:#424242">12/09/2025</div>
<div class="t" style="left:1017.5px;top:620.8px;color:#424242">2394a195-c6be-4b1a-bf0f-325611…</div>
<div class="t" style="left:1270.2px;top:620.8px;color:#424242">Rohdaten</div>
<div class="t" style="left:1438.3px;top:620.8px;color:#424242">0</div>
<div class="t" style="left:1741.7px;top:620.8px;color:#424242">Neu</div>
<div class="ab" style="left:0;top:653.46px;width:1766px;height:1.2px;background:#e6e6e6"></div>
<svg class="ab" style="left:44px;top:657.6px" width="26" height="42.4" viewBox="0 0 26 42.4"><rect width="26" height="42.4" fill="#e6e6ea"/>
<path d="M6.3 7.4 Q12.8 13.5 19.6 7.4 L21.3 8.3 Q23.6 9.8 24 15.5 L25.6 31.2 L22.4 32.2 L20.5 19 L20.3 34 Q13 37.2 6 34 L5.7 19 L3.8 32.2 L0.7 31.2 L2.2 15.5 Q2.6 9.8 4.8 8.3 Z" fill="#3a5276"/>
<path d="M20.5 19 L22.4 32.2 L25.6 31.2 L24 15.5 Z M5.7 19 L3.8 32.2 L0.7 31.2 L2.2 15.5 Z" fill="#2f4565"/></svg>
<div class="ab" style="left:159.8px;top:671.0px;width:15.2px;height:15.2px;border-radius:50%;background:#333;color:#fff;font-weight:bold;font-size:10.5px;line-height:15.4px;text-align:center">V</div>
<div class="t" style="left:254.0px;top:671.1px;color:#424242">10019285500004 …</div>
<div class="t" style="left:420.5px;top:671.1px;color:#424242">/Sortiment/Bekleidung/Damen/Oberteile/Shirts</div>
<div class="t" style="left:725.3px;top:671.1px;color:#424242">12/09/2025</div>
<div class="t" style="left:871.1px;top:671.1px;color:#424242">12/09/2025</div>
<div class="t" style="left:1017.5px;top:671.1px;color:#424242">2394a195-c6be-4b1a-bf0f-325611…</div>
<div class="t" style="left:1270.2px;top:671.1px;color:#424242">Rohdaten</div>
<div class="t" style="left:1438.3px;top:671.1px;color:#424242">0</div>
<div class="t" style="left:1741.7px;top:671.1px;color:#424242">Neu</div>
</div>
<div class="ab" style="left:332px;top:326.2px;width:1766px;height:1.2px;background:#e6e6e6"></div>
<div class="ab" style="left:2098px;top:176px;width:15px;height:690px;background:#fafafa"></div>
<svg class="ab" style="left:2100px;top:183px" width="10" height="8" viewBox="0 0 10 8"><path d="M0.8 7.5 L5 1 L9.2 7.5 Z" fill="#8a8a8a"/></svg>
<div class="ab" style="left:2100.7px;top:197.6px;width:8.3px;height:211px;border-radius:4.2px;background:#8a8a8a"></div>
<svg class="ab" style="left:2100px;top:836.5px" width="10" height="8" viewBox="0 0 10 8"><path d="M0.8 0.5 L5 7 L9.2 0.5 Z" fill="#8a8a8a"/></svg>
<div class="ab" style="left:332px;top:851.5px;width:1766px;height:14.5px;background:#fafafa"></div>
<svg class="ab" style="left:339.5px;top:854px" width="8" height="10" viewBox="0 0 8 10"><path d="M7.5 0.8 L1 5 L7.5 9.2 Z" fill="#8a8a8a"/></svg>
<div class="ab" style="left:354.3px;top:854px;width:1272.5px;height:8.7px;border-radius:4.3px;background:#8a8a8a"></div>
<svg class="ab" style="left:2083px;top:854px" width="8" height="10" viewBox="0 0 8 10"><path d="M0.5 0.8 L7 5 L0.5 9.2 Z" fill="#8a8a8a"/></svg>
<svg class="ab" style="left:2134.5px;top:13.5px" width="10" height="14" viewBox="0 0 10 14"><path d="M8 1 L2.2 7 L8 13" fill="none" stroke="#8a8a8a" stroke-width="1.6"/></svg>
<div class="t" style="left:2190.8px;top:13px;color:#33a0d6">Detail view</div>
<div class="t" style="left:2276px;top:13px">Product descrip…</div>
<svg class="ab" style="left:2397px;top:12.5px" width="10" height="15" viewBox="0 0 10 15"><path d="M2 1 L8 7.5 L2 14" fill="none" stroke="#3b3b3b" stroke-width="1.7"/></svg>
<div class="ab" style="left:2247px;top:46.6px;width:83.7px;height:32.2px;border-radius:3.5px;background:#9a9a9a"></div>
<div class="ab" style="left:2256.5px;top:53.5px;width:18px;height:18px;border-radius:50%;background:#fff"></div>
<svg class="ab" style="left:2261.5px;top:58.5px" width="8" height="8" viewBox="0 0 8 8"><path d="M1 1 L7 7 M7 1 L1 7" stroke="#9a9a9a" stroke-width="1.4"/></svg>
<div class="t" style="left:2282px;top:55px;color:#fff">Cancel</div>
<div class="ab" style="left:2338.5px;top:46.6px;width:72.3px;height:32.2px;border-radius:3.5px;background:#13b757"></div>
<svg class="ab" style="left:2349px;top:55px" width="16" height="14" viewBox="0 0 16 14"><path d="M1.5 7.5 L5.8 11.8 L14.5 2" fill="none" stroke="#fff" stroke-width="2.6"/></svg>
<div class="t" style="left:2373.6px;top:55px;color:#fff">Save</div>
<div class="t" style="left:2347.7px;top:97px">German</div>
<svg class="ab" style="left:2397px;top:100px" width="13" height="8" viewBox="0 0 13 8"><path d="M1 1 L6.5 7 L12 1" fill="none" stroke="#3b3b3b" stroke-width="1.3"/></svg>
<div class="t b" style="left:2130.6px;top:137.5px">Product overview</div>
<svg class="ab" style="left:2383px;top:139.5px" width="14" height="9" viewBox="0 0 14 9"><path d="M1 8 L7 1.8 L13 8" fill="none" stroke="#3b3b3b" stroke-width="1.8"/></svg>
<div class="ab" style="left:2413px;top:126px;width:15px;height:740px;background:#fafafa"></div>
<svg class="ab" style="left:2415.5px;top:132.5px" width="10" height="8" viewBox="0 0 10 8"><path d="M0.8 7.5 L5 1 L9.2 7.5 Z" fill="#8a8a8a"/></svg>
<div class="ab" style="left:2416.5px;top:147.5px;width:9px;height:582px;border-radius:4.5px;background:#8a8a8a"></div>
<svg class="ab" style="left:2415.5px;top:851px" width="10" height="8" viewBox="0 0 10 8"><path d="M0.8 0.5 L5 7 L9.2 0.5 Z" fill="#8a8a8a"/></svg>
<svg class="ab" style="left:2254px;top:193.5px" width="10" height="15" viewBox="0 0 10 15"><path d="M8 1 L2 7.5 L8 14" fill="none" stroke="#3b3b3b" stroke-width="1.7"/></svg>
<div class="ab" style="left:2278.6px;top:189.2px;width:62px;height:22.3px;border:1.3px solid #555"></div>
<div class="t" style="left:2278.6px;width:62px;top:193.5px;text-align:center">2 | 2</div>
<svg class="ab" style="left:2356px;top:193.5px" width="10" height="15" viewBox="0 0 10 15"><path d="M2 1 L8 7.5 L2 14" fill="none" stroke="#c8c8c8" stroke-width="1.7"/></svg>
<div class="ab" style="left:2145.5px;top:247px;width:236.5px;height:236.5px;background:#fff;border:1px solid #dedede;transform:rotate(8.6deg);transform-origin:50% 50%">
<div class="ab" style="left:0;top:39px"><svg width="236" height="157" viewBox="0 0 236 157" preserveAspectRatio="none" style="display:block">
<defs><linearGradient id="bkbg" x1="0" y1="0" x2="0" y2="1"><stop offset="0" stop-color="#d7d4dd"/><stop offset="0.45" stop-color="#dcd9e1"/><stop offset="0.7" stop-color="#e6e4ea"/><stop offset="1" stop-color="#dedbe4"/></linearGradient>
<linearGradient id="bkl1" x1="0" y1="0" x2="0" y2="1"><stop offset="0" stop-color="#222a26"/><stop offset="0.42" stop-color="#2c3832"/><stop offset="0.47" stop-color="#2f8e5a"/><stop offset="0.8" stop-color="#48b878"/><stop offset="1" stop-color="#2e8a56"/></linearGradient>
<linearGradient id="bkl2" x1="0" y1="0" x2="0.5" y2="1"><stop offset="0" stop-color="#2a3d33"/><stop offset="0.25" stop-color="#2f6e4c"/><stop offset="0.55" stop-color="#77caa0"/><stop offset="0.8" stop-color="#3fae6e"/><stop offset="1" stop-color="#2a8050"/></linearGradient>
<radialGradient id="bkrf" cx="0.5" cy="0.5" r="0.5"><stop offset="0" stop-color="#a3dcf6"/><stop offset="0.55" stop-color="#b6dcef" stop-opacity="0.8"/><stop offset="1" stop-color="#d8dcea" stop-opacity="0"/></radialGradient></defs>
<rect width="236" height="157" fill="url(#bkbg)"/>
<ellipse cx="83" cy="140" rx="30" ry="28" fill="url(#bkrf)"/><ellipse cx="155" cy="140" rx="30" ry="28" fill="url(#bkrf)"/>
<path d="M38 80.5 H45 M191.5 80.5 H186" stroke="#c8a860" stroke-width="1.6"/>
<path d="M103 76 Q116 69 131 76" fill="none" stroke="#c9a862" stroke-width="1.8"/>
<path d="M108 89 Q105 95 109 103 M126 89 Q129 95 125 103" fill="none" stroke="#b8b8c0" stroke-width="1"/>
<circle cx="73.5" cy="86" r="29" fill="url(#bkl1)" stroke="#15201a" stroke-width="2.8"/>
<circle cx="159.2" cy="86" r="29" fill="url(#bkl2)" stroke="#15201a" stroke-width="2.8"/>
</svg></div></div>
<div class="ab" style="left:2145.5px;top:247px;width:236.5px;height:236.5px;background:#fff;border:1px solid #e2e2e2">
<div class="ab" style="left:0;top:39px"><svg width="234.5" height="157" viewBox="0 0 236 157" preserveAspectRatio="none" style="display:block">
<defs><linearGradient id="frbg" x1="0" y1="0" x2="0" y2="1"><stop offset="0" stop-color="#d7d4dd"/><stop offset="0.45" stop-color="#dcd9e1"/><stop offset="0.7" stop-color="#e6e4ea"/><stop offset="1" stop-color="#dedbe4"/></linearGradient>
<linearGradient id="frl1" x1="0" y1="0" x2="0" y2="1"><stop offset="0" stop-color="#222a26"/><stop offset="0.42" stop-color="#2c3832"/><stop offset="0.47" stop-color="#2f8e5a"/><stop offset="0.8" stop-color="#48b878"/><stop offset="1" stop-color="#2e8a56"/></linearGradient>
<linearGradient id="frl2" x1="0" y1="0" x2="0.5" y2="1"><stop offset="0" stop-color="#2a3d33"/><stop offset="0.25" stop-color="#2f6e4c"/><stop offset="0.55" stop-color="#77caa0"/><stop offset="0.8" stop-color="#3fae6e"/><stop offset="1" stop-color="#2a8050"/></linearGradient>
<radialGradient id="frrf" cx="0.5" cy="0.5" r="0.5"><stop offset="0" stop-color="#a3dcf6"/><stop offset="0.55" stop-color="#b6dcef" stop-opacity="0.8"/><stop offset="1" stop-color="#d8dcea" stop-opacity="0"/></radialGradient></defs>
<rect width="236" height="157" fill="url(#frbg)"/>
<ellipse cx="83" cy="140" rx="30" ry="28" fill="url(#frrf)"/><ellipse cx="155" cy="140" rx="30" ry="28" fill="url(#frrf)"/>
<path d="M38 80.5 H45 M191.5 80.5 H186" stroke="#c8a860" stroke-width="1.6"/>
<path d="M103 76 Q116 69 131 76" fill="none" stroke="#c9a862" stroke-width="1.8"/>
<path d="M108 89 Q105 95 109 103 M126 89 Q129 95 125 103" fill="none" stroke="#b8b8c0" stroke-width="1"/>
<circle cx="73.5" cy="86" r="29" fill="url(#frl1)" stroke="#15201a" stroke-width="2.8"/>
<circle cx="159.2" cy="86" r="29" fill="url(#frl2)" stroke="#15201a" stroke-width="2.8"/>
</svg></div></div>
<div class="ab" style="left:2114px;top:500px;width:299px;height:366px;overflow:hidden">
<div class="t b" style="left:17px;top:23.8px">Identity</div>
<div class="t" style="left:121.5px;top:23.8px;width:162px;overflow:hidden">109261</div>
<div class="t b" style="left:17px;top:59.7px">Name</div>
<div class="t" style="left:121.5px;top:59.7px;width:162px;overflow:hidden">10013520 Sonnenbrille grün</div>
<div class="t b" style="left:17px;top:96.9px">Item type</div>
<div class="t" style="left:121.5px;top:96.9px;width:162px;overflow:hidden">Article</div>
<div class="t b" style="left:17px;top:133.3px">Classificati…</div>
<div class="t" style="left:121.5px;top:133.3px;width:162px;overflow:hidden">/Sortiment/Demo</div>
<div class="t b" style="left:17px;top:170.3px">Brand</div>
<div class="t" style="left:121.5px;top:170.3px;width:162px;overflow:hidden">apollon Fashion</div>
<div class="t" style="left:65.5px;top:169.8px;color:#e0533a;font-size:11px">*</div>
<svg class="ab" style="left:73.0px;top:168.8px" width="22" height="18" viewBox="0 0 22 18"><g fill="none" stroke="#3b3b3b" stroke-width="2.1" transform="rotate(-32 11 9)">
<rect x="1.8" y="5.2" width="11" height="7.6" rx="3.8"/><rect x="9.2" y="5.2" width="11" height="7.6" rx="3.8"/></g></svg>
<div class="t b" style="left:17px;top:206.3px">Produ…</div>
<div class="t" style="left:121.5px;top:206.3px;width:162px;overflow:hidden">100135</div>
<div class="t" style="left:84.8px;top:205.8px;color:#e0533a;font-size:11px">*</div>
<svg class="ab" style="left:92.0px;top:204.8px" width="22" height="18" viewBox="0 0 22 18"><g fill="none" stroke="#3b3b3b" stroke-width="2.1" transform="rotate(-32 11 9)">
<rect x="1.8" y="5.2" width="11" height="7.6" rx="3.8"/><rect x="9.2" y="5.2" width="11" height="7.6" rx="3.8"/></g></svg>
<div class="t b" style="left:17px;top:243.3px">Technical ID</div>
<div class="t" style="left:121.5px;top:243.3px;width:162px;overflow:hidden">18510458-aa7a-4aa8-87db-6</div>
<div class="t b" style="left:17px;top:279.3px">Release…</div>
<svg class="ab" style="left:92.0px;top:277.8px" width="22" height="18" viewBox="0 0 22 18"><g fill="none" stroke="#3b3b3b" stroke-width="2.1" transform="rotate(-32 11 9)">
<rect x="1.8" y="5.2" width="11" height="7.6" rx="3.8"/><rect x="9.2" y="5.2" width="11" height="7.6" rx="3.8"/></g></svg>
<div class="t b" style="left:17px;top:316.3px">Product…</div>
<svg class="ab" style="left:92.0px;top:314.8px" width="22" height="18" viewBox="0 0 22 18"><g fill="none" stroke="#3b3b3b" stroke-width="2.1" transform="rotate(-32 11 9)">
<rect x="1.8" y="5.2" width="11" height="7.6" rx="3.8"/><rect x="9.2" y="5.2" width="11" height="7.6" rx="3.8"/></g></svg>
<div class="t b" style="left:17px;top:358.5px">Product…</div>
<svg class="ab" style="left:92.0px;top:357.0px" width="22" height="18" viewBox="0 0 22 18"><g fill="none" stroke="#3b3b3b" stroke-width="2.1" transform="rotate(-32 11 9)">
<rect x="1.8" y="5.2" width="11" height="7.6" rx="3.8"/><rect x="9.2" y="5.2" width="11" height="7.6" rx="3.8"/></g></svg>
<div class="ab" style="left:120.7px;top:274.4px;width:16px;height:15.6px;border:1.2px solid #b0b0b0;border-radius:2px"></div>
<div class="ab" style="left:120.7px;top:309.0px;width:161.5px;height:29.5px;border:1.2px solid #aaa;border-radius:3px"></div>
<div class="t" style="left:130px;top:316.0px;color:#a8a8a8">New (default)</div>
<svg class="ab" style="left:261px;top:320.0px" width="12" height="7" viewBox="0 0 12 7"><path d="M1 1 L6.0 6 L11 1" fill="none" stroke="#888" stroke-width="1.2"/></svg>
<div class="ab" style="left:120.7px;top:351.5px;width:161.5px;height:29.5px;border:1.2px solid #aaa;border-radius:3px"></div>
<div class="t" style="left:130px;top:358.5px;color:#a8a8a8">Raw data (default)</div>
<svg class="ab" style="left:261px;top:362.5px" width="12" height="7" viewBox="0 0 12 7"><path d="M1 1 L6.0 6 L11 1" fill="none" stroke="#888" stroke-width="1.2"/></svg>
</div>
<div class="ab gray" style="left:69px;top:866px;width:2359px;height:41px"></div>
<svg class="ab" style="left:81px;top:877px" width="17" height="18" viewBox="0 0 17 18">
<path d="M8.5 0.5 L16.5 4.5 L16.5 13.5 L8.5 17.5 L0.5 13.5 L0.5 4.5 Z" fill="#3b3b3b"/>
<path d="M0.8 4.6 L8.5 8.5 L16.2 4.6 M8.5 8.5 V17.3" stroke="#e6e6e6" stroke-width="1.3" fill="none"/></svg>
<svg class="ab" style="left:110px;top:880px" width="10" height="13" viewBox="0 0 10 13"><path d="M2 1 L8 6.5 L2 12" fill="none" stroke="#3b3b3b" stroke-width="1.8"/></svg>
<div class="t" style="left:132px;top:879px;color:#33a0d6">OMN Search</div>
</body></html>
